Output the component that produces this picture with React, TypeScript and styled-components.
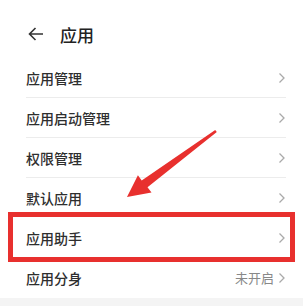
import React from "react";
import styled, { createGlobalStyle } from "styled-components";

const Global = createGlobalStyle`
  html, body { margin: 0; padding: 0; background: #fff; }
  body { font-family: "Noto Sans CJK SC", "Noto Sans", sans-serif; }
`;

const Page = styled.div`
  position: relative;
  width: 303px;
  height: 306px;
  overflow: hidden;
  background: #fff;
`;

const Header = styled.div`
  display: flex;
  align-items: center;
  gap: 16px;
  height: 48px;
  margin-top: 10px;
  padding-left: 28px;
`;

const Title = styled.div`
  font-size: 17px;
  font-weight: 500;
  color: #222;
`;

const List = styled.div`
  display: flex;
  flex-direction: column;
  padding: 0 17px 0 26px;
`;

const Row = styled.div<{ $divider?: boolean }>`
  display: flex;
  align-items: center;
  justify-content: space-between;
  height: 40px;
  box-sizing: border-box;
  border-bottom: 1px solid ${(p) => (p.$divider ? "#ececec" : "transparent")};
`;

const Label = styled.span`
  font-size: 14px;
  font-weight: 500;
  color: #2e2e2e;
`;

const Trail = styled.span`
  display: flex;
  align-items: center;
  gap: 4px;
`;

const Value = styled.span`
  font-size: 13px;
  color: #888;
`;

const Footer = styled.div`
  height: 10px;
  background: #f4f4f4;
`;

const Highlight = styled.div`
  position: absolute;
  left: 8px;
  top: 212px;
  width: 287px;
  height: 50px;
  box-sizing: border-box;
  border: 5px solid #e8302e;
`;

const ArrowSvg = styled.svg`
  position: absolute;
  left: 0;
  top: 0;
`;

const Chevron = () => (
  <svg width="8" height="12" viewBox="0 0 8 12">
    <path d="M1.5 1.5 L6 6 L1.5 10.5" fill="none" stroke="#aaa" strokeWidth="1.3" />
  </svg>
);

const Back = () => (
  <svg width="16" height="14" viewBox="0 0 16 14">
    <path d="M15 7 H1.8 M7.5 1 L1.5 7 L7.5 13" fill="none" stroke="#333" strokeWidth="1.6" />
  </svg>
);

const items: { label: string; value?: string }[] = [
  { label: "应用管理" },
  { label: "应用启动管理" },
  { label: "权限管理" },
  { label: "默认应用" },
  { label: "应用助手" },
  { label: "应用分身", value: "未开启" },
];

export default function App() {
  return (
    <Page>
      <Global />
      <Header>
        <Back />
        <Title>应用</Title>
      </Header>
      <List>
        {items.map((it, i) => (
          <Row key={it.label} $divider={i < 3}>
            <Label>{it.label}</Label>
            <Trail>
              {it.value && <Value>{it.value}</Value>}
              <Chevron />
            </Trail>
          </Row>
        ))}
      </List>
      <Footer />
      <Highlight />
      <ArrowSvg width="303" height="306" viewBox="0 0 303 306">
        <polygon
          points="127,197 151.5,192.5 147.5,187.3 216.8,131.9 215.2,130.1 141.7,180.5 137.9,175.3"
          fill="#e8302e"
        />
      </ArrowSvg>
    </Page>
  );
}
